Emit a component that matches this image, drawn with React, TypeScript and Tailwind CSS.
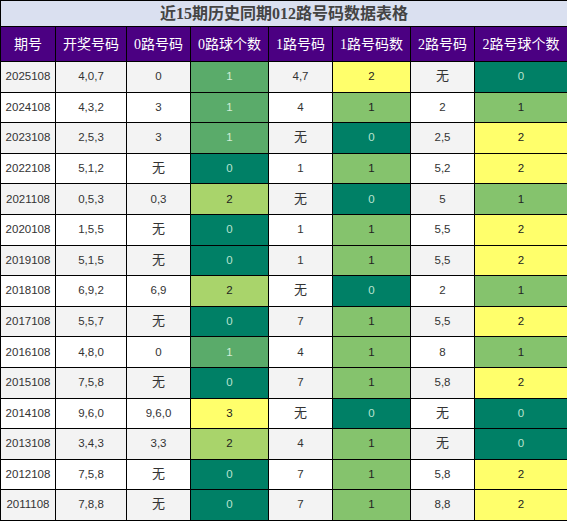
import React from "react";

const headers = ["期号", "开奖号码", "0路号码", "0路球个数", "1路号码", "1路号码数", "2路号码", "2路号球个数"];

// 期号, 开奖, 0路号码, 0路个数, 1路号码, 1路个数, 2路号码, 2路个数
const rows: [string, string, string, number, string, number, string, number][] = [
  ["2025108", "4,0,7", "0", 1, "4,7", 2, "无", 0],
  ["2024108", "4,3,2", "3", 1, "4", 1, "2", 1],
  ["2023108", "2,5,3", "3", 1, "无", 0, "2,5", 2],
  ["2022108", "5,1,2", "无", 0, "1", 1, "5,2", 2],
  ["2021108", "0,5,3", "0,3", 2, "无", 0, "5", 1],
  ["2020108", "1,5,5", "无", 0, "1", 1, "5,5", 2],
  ["2019108", "5,1,5", "无", 0, "1", 1, "5,5", 2],
  ["2018108", "6,9,2", "6,9", 2, "无", 0, "2", 1],
  ["2017108", "5,5,7", "无", 0, "7", 1, "5,5", 2],
  ["2016108", "4,8,0", "0", 1, "4", 1, "8", 1],
  ["2015108", "7,5,8", "无", 0, "7", 1, "5,8", 2],
  ["2014108", "9,6,0", "9,6,0", 3, "无", 0, "无", 0],
  ["2013108", "3,4,3", "3,3", 2, "4", 1, "无", 0],
  ["2012108", "7,5,8", "无", 0, "7", 1, "5,8", 2],
  ["2011108", "7,8,8", "无", 0, "7", 1, "8,8", 2],
];

// 0路球个数 uses its own palette
function zeroCls(n: number) {
  if (n === 0) return "bg-[#008066] text-[#b9e3cf]";
  if (n === 1) return "bg-[#5aab6a] text-[#d3eed8]";
  if (n === 2) return "bg-[#a9d46b] text-[#222]";
  return "bg-[#ffff6b] text-[#222]";
}

function countCls(n: number) {
  if (n === 0) return "bg-[#008066] text-[#b9e3cf]";
  if (n === 1) return "bg-[#85c36d] text-[#222]";
  return "bg-[#ffff6b] text-[#222]";
}

function Txt({ v }: { v: string }) {
  if (v === "无") return <span className="text-[13px] leading-none">无</span>;
  return <>{v}</>;
}

export default function App() {
  const td = "border border-black text-center p-0";
  return (
    <div className="w-[567px] h-[521px] bg-white">
      <table
        className="w-[567px] table-fixed border-collapse border border-black"
        style={{ fontFamily: '"Liberation Serif", "Noto Sans CJK SC", serif' }}
      >
        <colgroup>
          <col className="w-[55px]" />
          <col className="w-[71px]" />
          <col className="w-[64px]" />
          <col className="w-[78px]" />
          <col className="w-[64px]" />
          <col className="w-[78px]" />
          <col className="w-[64px]" />
          <col className="w-[93px]" />
        </colgroup>
        <thead>
          <tr className="h-[26px]">
            <th
              colSpan={8}
              className="border border-black bg-[#dae0f0] text-[16px] font-bold text-[#444] text-center p-0 leading-none"
            >
              近15期历史同期012路号码数据表格
            </th>
          </tr>
          <tr className="h-[35px]">
            {headers.map((h) => (
              <th key={h} className="border border-black bg-[#4b0082] text-white text-[14px] font-normal text-center p-0 whitespace-nowrap">
                {h}
              </th>
            ))}
          </tr>
        </thead>
        <tbody
          className="text-[11.5px] text-[#333]"
          style={{ fontFamily: '"Liberation Sans", "Noto Sans CJK SC", sans-serif' }}
        >
          {rows.map((r, i) => (
            <tr key={r[0]} className={"h-[30.6px] " + (i % 2 === 0 ? "bg-[#f3f3f3]" : "bg-white")}>
              <td className={td}>{r[0]}</td>
              <td className={td}>{r[1]}</td>
              <td className={td}><Txt v={r[2]} /></td>
              <td className={td + " " + zeroCls(r[3])}>{r[3]}</td>
              <td className={td}><Txt v={r[4]} /></td>
              <td className={td + " " + countCls(r[5])}>{r[5]}</td>
              <td className={td}><Txt v={r[6]} /></td>
              <td className={td + " " + countCls(r[7])}>{r[7]}</td>
            </tr>
          ))}
        </tbody>
      </table>
    </div>
  );
}
